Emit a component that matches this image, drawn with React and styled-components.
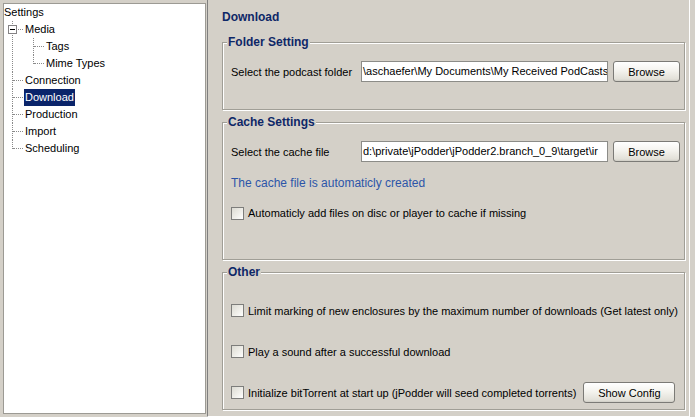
import React from 'react';
import styled, { createGlobalStyle } from 'styled-components';

const GlobalStyle = createGlobalStyle`
  html, body {
    margin: 0;
    padding: 0;
    background: #d4d0c8;
  }
  body {
    font-family: "Liberation Sans", Arial, sans-serif;
    font-size: 11px;
    color: #000;
  }
`;

const Window = styled.div`
  display: flex;
  width: 695px;
  height: 417px;
  overflow: hidden;
  background: #d4d0c8;
`;

/* ---------- tree ---------- */

const TreePanel = styled.div`
  box-sizing: border-box;
  width: 203px;
  height: 411px;
  margin: 3px 0 0 3px;
  background: #fff;
  border: 1px solid #9c9a94;
  line-height: 17px;
  flex-shrink: 0;
`;

const RootLabel = styled.div`
  height: 17px;
`;

const Branch = styled.ul`
  list-style: none;
  margin: 0 0 0 ${(p) => p.$indent}px;
  padding: 0;
`;

const Node = styled.li`
  position: relative;
  padding-left: 12px;

  &::before {
    content: '';
    position: absolute;
    left: 0;
    top: 0;
    bottom: 0;
    border-left: 1px dotted #8a8a8a;
  }
  &:last-child::before {
    bottom: auto;
    height: 9px;
  }
  &::after {
    content: '';
    position: absolute;
    left: 1px;
    top: 8px;
    width: 10px;
    border-top: 1px dotted #8a8a8a;
  }
`;

const NodeLabel = styled.span`
  display: inline-block;
  height: 17px;
  padding: 0 1px;
  background: ${(p) => (p.$selected ? '#0a246a' : 'transparent')};
  color: ${(p) => (p.$selected ? '#fff' : '#000')};
`;

const Expander = styled.span`
  position: absolute;
  z-index: 1;
  left: -4px;
  top: 4px;
  box-sizing: border-box;
  width: 9px;
  height: 9px;
  background: #fff;
  border: 1px solid #848284;

  &::after {
    content: '';
    position: absolute;
    left: 1px;
    top: 3px;
    width: 5px;
    height: 1px;
    background: #000;
  }
`;

/* ---------- right side ---------- */

const Content = styled.div`
  box-sizing: border-box;
  width: 483px;
  height: 417px;
  margin-left: 1px;
  padding: 10px 4px 0 14px;
  border-left: 1px solid #808080;
  border-right: 1px solid #fff;
  border-bottom: 1px solid #fff;
  flex-shrink: 0;
`;

const PageTitle = styled.div`
  font-size: 12px;
  font-weight: bold;
  line-height: 14px;
  color: #0e2767;
  margin-bottom: 18px;
`;

const Group = styled.div`
  position: relative;
  box-sizing: border-box;
  width: 463px;
  height: ${(p) => p.$height}px;
  margin-bottom: 12px;
  padding: ${(p) => p.$padTop}px 4px 0 8px;
  border: 1px solid #a09e96;
  box-shadow: inset 1px 1px 0 #fff, 1px 1px 0 #fff;
  display: flex;
  flex-direction: column;
  gap: ${(p) => p.$gap || 0}px;
`;

const GroupTitle = styled.span`
  position: absolute;
  top: -8px;
  left: 4px;
  padding: 0 1px;
  background: #d4d0c8;
  font-size: 12px;
  font-weight: bold;
  line-height: 14px;
  color: #0e2767;
`;

const FieldRow = styled.div`
  display: flex;
  align-items: center;
  height: 21px;
`;

const FieldLabel = styled.span`
  width: 130px;
  flex-shrink: 0;
`;

const TextBox = styled.div`
  box-sizing: border-box;
  width: 247px;
  height: 21px;
  padding: 0 1px;
  background: #fff;
  border: 1px solid #8c8c88;
  font-size: 11px;
  line-height: 19px;
  white-space: nowrap;
  overflow: hidden;
`;

const Button = styled.button`
  box-sizing: border-box;
  width: ${(p) => p.$width}px;
  height: 21px;
  margin-left: ${(p) => p.$gap}px;
  padding: 0;
  font-family: inherit;
  font-size: 11px;
  color: #000;
  border: 1px solid #7b7a76;
  border-radius: 3px;
  background: linear-gradient(#ffffff 0%, #f4f3ee 45%, #e2e0d8 90%, #cfcdc5 100%);
  flex-shrink: 0;
`;

const Note = styled.div`
  margin-top: 13px;
  font-size: 12px;
  line-height: 16px;
  color: #2c55a8;
`;

const CheckRow = styled.label`
  display: flex;
  align-items: center;
  height: ${(p) => p.$height || 16}px;
  margin-top: ${(p) => p.$top || 0}px;
`;

const Box = styled.span`
  box-sizing: border-box;
  width: 13px;
  height: 13px;
  margin-right: 4px;
  border: 1px solid #7d7d7b;
  background: linear-gradient(135deg, #dcdbd3 0%, #efeee9 55%, #ffffff 100%);
  flex-shrink: 0;
`;

function Check({ children, height, top }) {
  return (
    <CheckRow $height={height} $top={top}>
      <Box />
      {children}
    </CheckRow>
  );
}

export default function App() {
  return (
    <>
      <GlobalStyle />
      <Window>
        <TreePanel>
          <RootLabel>Settings</RootLabel>
          <Branch $indent={8}>
            <Node>
              <Expander />
              <NodeLabel>Media</NodeLabel>
              <Branch $indent={9}>
                <Node>
                  <NodeLabel>Tags</NodeLabel>
                </Node>
                <Node>
                  <NodeLabel>Mime Types</NodeLabel>
                </Node>
              </Branch>
            </Node>
            <Node>
              <NodeLabel>Connection</NodeLabel>
            </Node>
            <Node>
              <NodeLabel $selected>Download</NodeLabel>
            </Node>
            <Node>
              <NodeLabel>Production</NodeLabel>
            </Node>
            <Node>
              <NodeLabel>Import</NodeLabel>
            </Node>
            <Node>
              <NodeLabel>Scheduling</NodeLabel>
            </Node>
          </Branch>
        </TreePanel>

        <Content>
          <PageTitle>Download</PageTitle>

          <Group $height={68} $padTop={18}>
            <GroupTitle>Folder Setting</GroupTitle>
            <FieldRow>
              <FieldLabel>Select the podcast folder</FieldLabel>
              <TextBox>\aschaefer\My Documents\My Received PodCasts</TextBox>
              <Button $width={67} $gap={5}>Browse</Button>
            </FieldRow>
          </Group>

          <Group $height={138} $padTop={18}>
            <GroupTitle>Cache Settings</GroupTitle>
            <FieldRow>
              <FieldLabel>Select the cache file</FieldLabel>
              <TextBox>d:\private\jPodder\jPodder2.branch_0_9\target\ir</TextBox>
              <Button $width={67} $gap={5}>Browse</Button>
            </FieldRow>
            <Note>The cache file is automaticly created</Note>
            <Check top={14}>Automaticly add files on disc or player to cache if missing</Check>
          </Group>

          <Group $height={138} $padTop={27} $gap={20}>
            <GroupTitle>Other</GroupTitle>
            <Check height={21}>
              Limit marking of new enclosures by the maximum number of downloads (Get latest only)
            </Check>
            <Check height={21}>Play a sound after a successful download</Check>
            <Check height={21}>
              Initialize bitTorrent at start up (jPodder will seed completed torrents)
              <Button $width={92} $gap={7}>Show Config</Button>
            </Check>
          </Group>
        </Content>
      </Window>
    </>
  );
}
